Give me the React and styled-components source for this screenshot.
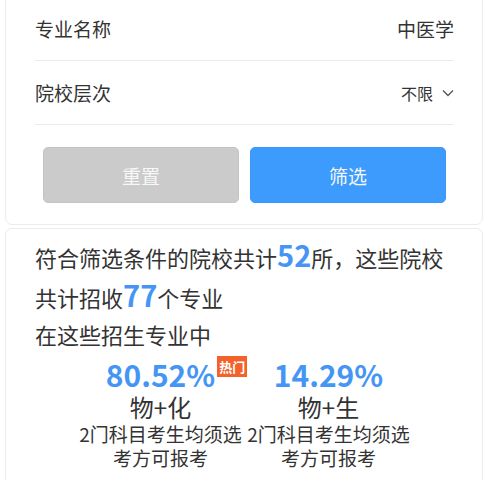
import React from "react";
import styled, { createGlobalStyle } from "styled-components";

const GlobalStyle = createGlobalStyle`
  body {
    margin: 0;
    background: #fff;
    font-family: "Noto Sans CJK SC", "Noto Sans", sans-serif;
    color: #333;
  }
`;

const Page = styled.div`
  padding: 0 5px;
  margin-top: -4px;
  display: flex;
  flex-direction: column;
  gap: 3px;
`;

const Card = styled.div`
  background: #fff;
  border: 1px solid #ececec;
  border-radius: 7px;
  padding: ${(p) => p.$pad || "0 28px 0 29px"};
`;

const Row = styled.div`
  height: 63px;
  display: flex;
  align-items: center;
  justify-content: space-between;
  border-bottom: 1px solid #ececec;
`;

const Label = styled.span`
  font-size: 19px;
  color: #333;
`;

const Value = styled.span`
  font-size: ${(p) => p.$size || "19px"};
  color: #333;
  display: flex;
  align-items: center;
  gap: 9px;
`;

const Buttons = styled.div`
  display: flex;
  gap: 11px;
  padding: 22px 8px 21px;
`;

const Button = styled.button`
  flex: 1;
  height: 56px;
  border: 1px solid ${(p) => (p.$primary ? "#3a97fb" : "#c4c4c4")};
  border-radius: 5px;
  background: ${(p) => (p.$primary ? "#3d9bfd" : "#cbcbcb")};
  color: #f7f7f7;
  font-family: inherit;
  font-size: 19px;
`;

const Summary = styled.div`
  font-size: 22px;
  line-height: 37px;
  color: #333;
`;

const Num = styled.span`
  color: #4596f4;
  font-size: 29px;
  font-weight: 700;
`;

const Stats = styled.div`
  display: flex;
  justify-content: center;
  padding-top: 3px;
`;

const Stat = styled.div`
  width: 168px;
  display: flex;
  flex-direction: column;
  align-items: center;
  text-align: center;
`;

const Percent = styled.div`
  position: relative;
  font-size: 30px;
  font-weight: 700;
  color: #4596f4;
  line-height: 36px;
`;

const Hot = styled.span`
  position: absolute;
  left: calc(100% + 2px);
  top: 0;
  width: 30px;
  height: 21px;
  background: #f2622a;
  color: #fff;
  font-size: 13px;
  font-weight: 700;
  line-height: 21px;
  text-align: center;
`;

const Combo = styled.div`
  font-size: 24px;
  line-height: 30px;
  color: #333;
`;

const Note = styled.div`
  font-size: 19px;
  line-height: 24px;
  color: #333;
  white-space: nowrap;
`;

const Chevron = () => (
  <svg width="12" height="8" viewBox="0 0 12 8" fill="none">
    <polyline points="1,1.5 6,6.5 11,1.5" stroke="#555" strokeWidth="1.3" />
  </svg>
);

const stats = [
  { pct: "80.52%", combo: "物+化", hot: true },
  { pct: "14.29%", combo: "物+生", hot: false },
];

export default function App() {
  return (
    <>
      <GlobalStyle />
      <Page>
        <Card>
          <Row>
            <Label>专业名称</Label>
            <Value>中医学</Value>
          </Row>
          <Row>
            <Label>院校层次</Label>
            <Value $size="16px">
              不限
              <Chevron />
            </Value>
          </Row>
          <Buttons>
            <Button>重置</Button>
            <Button $primary>筛选</Button>
          </Buttons>
        </Card>
        <Card $pad="7px 28px 20px 29px">
          <Summary>
            符合筛选条件的院校共计<Num>52</Num>所，这些院校
            <br />
            共计招收<Num>77</Num>个专业
            <br />
            在这些招生专业中
          </Summary>
          <Stats>
            {stats.map((s) => (
              <Stat key={s.pct}>
                <Percent>
                  {s.pct}
                  {s.hot && <Hot>热门</Hot>}
                </Percent>
                <Combo>{s.combo}</Combo>
                <Note>2门科目考生均须选</Note>
                <Note>考方可报考</Note>
              </Stat>
            ))}
          </Stats>
        </Card>
      </Page>
    </>
  );
}
